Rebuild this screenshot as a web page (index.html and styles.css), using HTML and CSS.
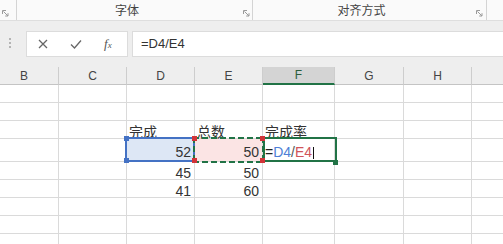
FILE: index.html
```html
<!DOCTYPE html>
<html lang="zh-CN">
    <head>
        <meta charset="UTF-8" />
        <title>完成率</title>
        <link rel="stylesheet" href="styles.css">
    </head>
    <body>
        <div class="ribbon">
            <div class="group group-edge">
                <svg class="launcher" viewBox="0 0 7 7"><path d="M0.5 4V0.5H4 M1.5 1.5L6 6 M6 3.2V6H3.2" /></svg>
            </div>
            <div class="group group-font">
                <span class="label">字体</span>
                <svg class="launcher" viewBox="0 0 7 7"><path d="M0.5 4V0.5H4 M1.5 1.5L6 6 M6 3.2V6H3.2" /></svg>
            </div>
            <div class="group group-align">
                <span class="label">对齐方式</span>
                <svg class="launcher" viewBox="0 0 7 7"><path d="M0.5 4V0.5H4 M1.5 1.5L6 6 M6 3.2V6H3.2" /></svg>
            </div>
        </div>

        <div class="formula-bar">
            <span class="grip"></span>
            <div class="fx-box">
                <svg class="icon" viewBox="0 0 10 10"><path d="M1 1L9 9 M9 1L1 9" /></svg>
                <svg class="icon" viewBox="0 0 12 10"><path d="M1 5.5L4.5 9L11 1.5" /></svg>
                <span class="fx">f<small>x</small></span>
            </div>
            <div class="input">=D4/E4</div>
        </div>

        <div class="sheet-view">
            <div class="sheet">
                <!-- column headers -->
                <div class="cell head">B</div>
                <div class="cell head">C</div>
                <div class="cell head">D</div>
                <div class="cell head">E</div>
                <div class="cell head selected">F</div>
                <div class="cell head">G</div>
                <div class="cell head">H</div>
                <div class="cell head"></div>

                <!-- row 1 -->
                <div class="cell"></div><div class="cell"></div><div class="cell"></div><div class="cell"></div>
                <div class="cell"></div><div class="cell"></div><div class="cell"></div><div class="cell"></div>
                <!-- row 2 -->
                <div class="cell"></div><div class="cell"></div><div class="cell"></div><div class="cell"></div>
                <div class="cell"></div><div class="cell"></div><div class="cell"></div><div class="cell"></div>
                <!-- row 3 -->
                <div class="cell"></div><div class="cell"></div>
                <div class="cell">完成</div>
                <div class="cell">总数</div>
                <div class="cell">完成率</div>
                <div class="cell"></div><div class="cell"></div><div class="cell"></div>
                <!-- row 4: editing F4 -->
                <div class="cell tall"></div><div class="cell tall"></div>
                <div class="cell tall num ref-blue">52<span class="handle blue tl"></span><span class="handle blue bl"></span></div>
                <div class="cell tall num ref-red">50<span class="marquee"></span><span class="handle red tl"></span><span class="handle red bl"></span><span class="handle red tr"></span><span class="handle red br"></span></div>
                <div class="cell tall active"><span class="eq">=</span><span class="ref-d">D4</span><span class="slash">/</span><span class="ref-e">E4</span><span class="caret"></span><span class="handle green br"></span></div>
                <div class="cell tall"></div><div class="cell tall"></div><div class="cell tall"></div>
                <!-- row 5 -->
                <div class="cell"></div><div class="cell"></div>
                <div class="cell num">45</div>
                <div class="cell num">50</div>
                <div class="cell"></div><div class="cell"></div><div class="cell"></div><div class="cell"></div>
                <!-- row 6 -->
                <div class="cell"></div><div class="cell"></div>
                <div class="cell num">41</div>
                <div class="cell num">60</div>
                <div class="cell"></div><div class="cell"></div><div class="cell"></div><div class="cell"></div>
                <!-- rows 7-9 -->
                <div class="cell"></div><div class="cell"></div><div class="cell"></div><div class="cell"></div>
                <div class="cell"></div><div class="cell"></div><div class="cell"></div><div class="cell"></div>
                <div class="cell"></div><div class="cell"></div><div class="cell"></div><div class="cell"></div>
                <div class="cell"></div><div class="cell"></div><div class="cell"></div><div class="cell"></div>
                <div class="cell"></div><div class="cell"></div><div class="cell"></div><div class="cell"></div>
                <div class="cell"></div><div class="cell"></div><div class="cell"></div><div class="cell"></div>
            </div>
        </div>
    </body>
</html>
```

FILE: styles.css
```css
:root {
    --grid-line: #dadada;
    --head-bg: #eeeeee;
    --excel-green: #217346;
    --ref-blue: #4472c4;
    --ref-red: #d13438;
}
* {
    box-sizing: border-box;
}
body {
    margin: 0;
    width: 503px;
    height: 244px;
    overflow: hidden;
    background-color: white;
    font-family: "Liberation Sans", "Noto Sans CJK SC", sans-serif;
    color: #333;
}

/* ribbon group labels */
.ribbon {
    display: flex;
    height: 21px;
    background-color: #fafafa;
    border-bottom: 1px solid #dedede;
}
.group {
    display: flex;
    align-items: center;
    border-right: 1px solid #d4d4d4;
}
.group-edge {
    width: 17px;
    justify-content: flex-end;
    padding-right: 7px;
}
.group-font {
    width: 236px;
    padding-right: 2px;
}
.group-align {
    width: 234px;
    padding-right: 3px;
}
.group .label {
    flex: 1;
    text-align: center;
    padding-right: 6px;
    font-family: "Noto Sans CJK SC", sans-serif;
    font-size: 12px;
    line-height: 20px;
    color: #444;
}
.launcher {
    width: 7px;
    height: 7px;
    align-self: flex-end;
    margin-bottom: 3px;
    fill: none;
    stroke: #9a9a9a;
    stroke-width: 1;
}

/* formula bar */
.formula-bar {
    display: flex;
    align-items: flex-start;
    height: 46px;
    padding-top: 10px;
    background-color: #eeeeee;
}
.grip {
    width: 26px;
    padding: 7px 0 0 9px;
}
.grip::before {
    content: "";
    display: block;
    height: 10px;
    border-left: 2px dotted #b4b4b4;
}
.fx-box {
    display: flex;
    align-items: center;
    gap: 22px;
    width: 102px;
    height: 26px;
    padding-left: 11px;
    background-color: white;
    border: 1px solid #dcdcdc;
}
.icon {
    width: 10px;
    height: 10px;
    fill: none;
    stroke: #666;
    stroke-width: 1.3;
}
.icon:nth-child(2) {
    width: 12px;
}
.fx {
    font-family: "Liberation Serif", serif;
    font-style: italic;
    font-size: 13px;
    color: #555;
}
.fx small {
    font-size: 9px;
}
.input {
    flex: 1;
    height: 26px;
    margin-left: 4px;
    padding-left: 8px;
    background-color: white;
    border: 1px solid #dcdcdc;
    border-right: none;
    font-size: 13px;
    line-height: 24px;
    color: #333;
}

/* worksheet */
.sheet-view {
    width: 503px;
    overflow: hidden;
}
.sheet {
    display: grid;
    grid-template-columns: 69px 68px 68px 68px 72px 69px 68px 69px;
    grid-template-rows: 18px 18px 18px 18px 23px repeat(5, 18px);
    width: 513px;
    margin-left: -10px;
}
.cell {
    position: relative;
    display: flex;
    align-items: flex-end;
    padding: 0 2px;
    border-right: 1px solid var(--grid-line);
    border-bottom: 1px solid var(--grid-line);
    font-size: 14px;
    line-height: 11px;
    white-space: nowrap;
}
.cell.head {
    justify-content: center;
    align-items: center;
    padding: 0;
    background-color: var(--head-bg);
    border-right-color: #cdcdcd;
    border-bottom-color: #c4c4c4;
    font-size: 12px;
    line-height: 16px;
    color: #444;
}
.cell.head.selected {
    background-color: #d4d4d4;
    border-bottom: 2px solid var(--excel-green);
    color: #2b5d3c;
}
.cell.num {
    justify-content: flex-end;
    padding-right: 3px;
}
.cell.tall {
    padding-bottom: 3px;
}

/* formula references */
.ref-blue {
    background-color: #dde7f5;
}
.ref-blue::before {
    content: "";
    position: absolute;
    left: -2px;
    top: -2px;
    right: -1px;
    bottom: -1px;
    border: 2px solid var(--ref-blue);
}
.ref-red {
    background-color: #fbe4e4;
}
.marquee {
    position: absolute;
    left: -2px;
    top: -2px;
    right: -2px;
    bottom: -2px;
    background:
        repeating-linear-gradient(90deg, var(--excel-green) 0 6px, transparent 6px 9px) top / 100% 2px no-repeat,
        repeating-linear-gradient(90deg, var(--excel-green) 0 6px, transparent 6px 9px) bottom / 100% 2px no-repeat,
        repeating-linear-gradient(180deg, var(--excel-green) 0 6px, transparent 6px 9px) left / 2px 100% no-repeat,
        repeating-linear-gradient(180deg, var(--excel-green) 0 6px, transparent 6px 9px) right / 2px 100% no-repeat;
}
.active::before {
    content: "";
    position: absolute;
    left: 0;
    top: -2px;
    right: -3px;
    bottom: -1px;
    border: 2px solid var(--excel-green);
}
.eq {
    color: #222;
}
.ref-d {
    color: #4f7fd6;
}
.slash {
    color: #555;
}
.ref-e {
    color: #d0545a;
}
.caret {
    display: inline-block;
    width: 1px;
    height: 12px;
    margin-left: 1px;
    margin-bottom: -1px;
    background-color: #111;
}

/* selection handles */
.handle {
    position: absolute;
    width: 5px;
    height: 5px;
    z-index: 2;
}
.handle.blue { background-color: var(--ref-blue); }
.handle.red { background-color: var(--ref-red); }
.handle.green { background-color: var(--excel-green); }
.handle.tl { left: -3px; top: -3px; }
.handle.bl { left: -3px; bottom: -2px; }
.handle.tr { right: -3px; top: -3px; }
.handle.br { right: -3px; bottom: -2px; }
.handle.green.br { right: -4px; bottom: -4px; }
```
